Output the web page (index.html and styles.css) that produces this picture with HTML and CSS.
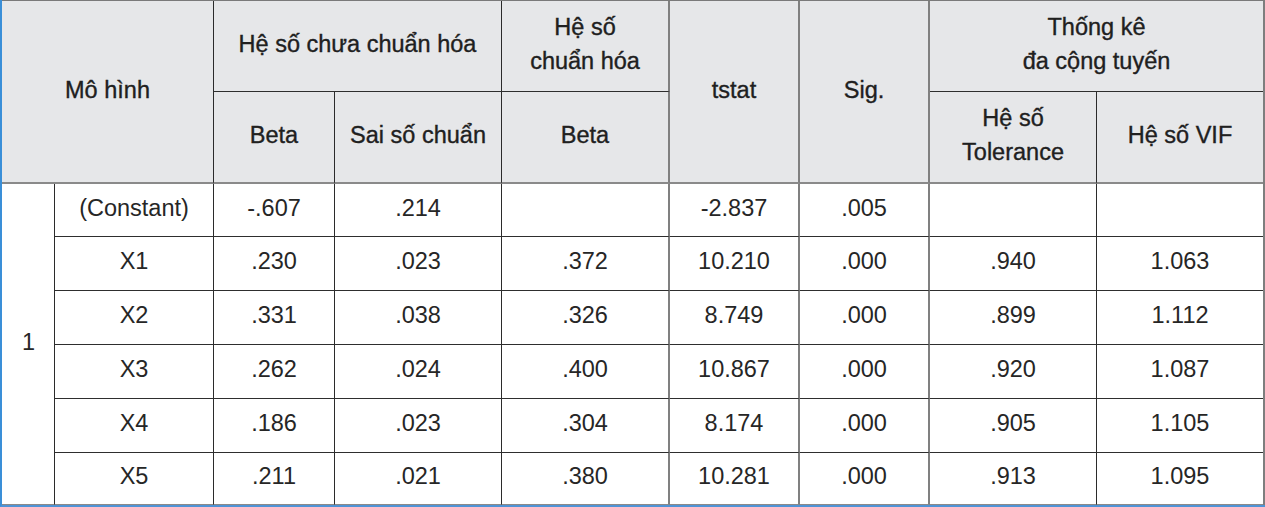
FILE: index.html
```html
<!DOCTYPE html>
<html lang="vi">
<head>
<meta charset="utf-8">
<title>Bảng hồi quy</title>
<link rel="stylesheet" href="styles.css">
</head>
<body>
<div class="frame">
<table class="reg">
  <colgroup>
    <col class="c1"><col class="c2"><col class="c3"><col class="c4"><col class="c5"><col class="c6"><col class="c7"><col class="c8"><col class="c9">
  </colgroup>
  <thead>
    <tr class="h1">
      <th colspan="2" rowspan="2" class="dk hb">Mô hình</th>
      <th colspan="2" class="dk">Hệ số chưa chuẩn hóa</th>
      <th class="gy">Hệ số<br>chuẩn hóa</th>
      <th rowspan="2" class="gy hb">tstat</th>
      <th rowspan="2" class="gy hb">Sig.</th>
      <th colspan="2" class="last">Thống kê<br>đa cộng tuyến</th>
    </tr>
    <tr class="h2">
      <th class="dk hb">Beta</th>
      <th class="dk hb">Sai số chuẩn</th>
      <th class="gy hb">Beta</th>
      <th class="dk hb">Hệ số<br>Tolerance</th>
      <th class="last hb">Hệ số VIF</th>
    </tr>
  </thead>
  <tbody>
    <tr class="r53">
      <td rowspan="6" class="dk model">1</td>
      <td class="dk">(Constant)</td><td class="dk">-.607</td><td class="dk">.214</td><td class="gy"></td><td class="gy">-2.837</td><td class="gy">.005</td><td class="dk"></td><td class="last"></td>
    </tr>
    <tr class="r54">
      <td class="dk">X1</td><td class="dk">.230</td><td class="dk">.023</td><td class="gy">.372</td><td class="gy">10.210</td><td class="gy">.000</td><td class="dk">.940</td><td class="last">1.063</td>
    </tr>
    <tr class="r54">
      <td class="dk">X2</td><td class="dk">.331</td><td class="dk">.038</td><td class="gy">.326</td><td class="gy">8.749</td><td class="gy">.000</td><td class="dk">.899</td><td class="last">1.112</td>
    </tr>
    <tr class="r54">
      <td class="dk">X3</td><td class="dk">.262</td><td class="dk">.024</td><td class="gy">.400</td><td class="gy">10.867</td><td class="gy">.000</td><td class="dk">.920</td><td class="last">1.087</td>
    </tr>
    <tr class="r54">
      <td class="dk">X4</td><td class="dk">.186</td><td class="dk">.023</td><td class="gy">.304</td><td class="gy">8.174</td><td class="gy">.000</td><td class="dk">.905</td><td class="last">1.105</td>
    </tr>
    <tr class="r52">
      <td class="dk bot">X5</td><td class="dk bot">.211</td><td class="dk bot">.021</td><td class="gy bot">.380</td><td class="gy bot">10.281</td><td class="gy bot">.000</td><td class="dk bot">.913</td><td class="last bot">1.095</td>
    </tr>
  </tbody>
</table>
</div>
</body>
</html>
```
FILE: styles.css
```css
html, body {
  margin: 0;
  padding: 0;
  background: #ffffff;
}

.frame {
  width: 1265px;
  height: 507px;
  box-sizing: border-box;
  border-left: 2px solid #3a8fd8;
  border-bottom: 2px solid #4f93d6;
  overflow: hidden;
}

.reg {
  width: 1263px;
  table-layout: fixed;
  border-collapse: separate;
  border-spacing: 0;
  border-top: 1px solid #7a7a7a;
  border-right: 2px solid #7e7e7e;
  font-family: "Liberation Sans", Arial, sans-serif;
  color: #222222;
}

.c1 { width: 53px; }
.c2 { width: 159px; }
.c3 { width: 121px; }
.c4 { width: 167px; }
.c5 { width: 168px; }
.c6 { width: 130px; }
.c7 { width: 130px; }
.c8 { width: 167px; }
.c9 { width: 166px; }

.reg th,
.reg td {
  padding: 0;
  text-align: center;
  vertical-align: middle;
  border-bottom: 1px solid #2e2e2e;
  box-sizing: border-box;
}

.reg th {
  background: #e6e7e9;
  font-size: 23.5px;
  font-weight: normal;
  line-height: 34px;
  color: #202020;
  -webkit-text-stroke: 0.35px #202020;
  padding-bottom: 4px;
}

.reg td {
  font-size: 23.5px;
  line-height: 26px;
  color: #262626;
  padding-bottom: 5px;
}

.reg .dk { border-right: 1px solid #2b2b2b; }
.reg .gy { border-right: 2px solid #808080; }
.reg .last { border-right: 0; }

.reg .hb { border-bottom: 2px solid #8a8a8a; }
.reg .bot { border-bottom: 1px solid #8a8a8a; }
.reg .model { border-bottom: 1px solid #8a8a8a; text-align: left; padding-left: 20px; }

.h1 { height: 91px; }
.h2 { height: 92px; }
.r53 { height: 53px; }
.r54 { height: 54px; }
.r52 { height: 52px; }
```
